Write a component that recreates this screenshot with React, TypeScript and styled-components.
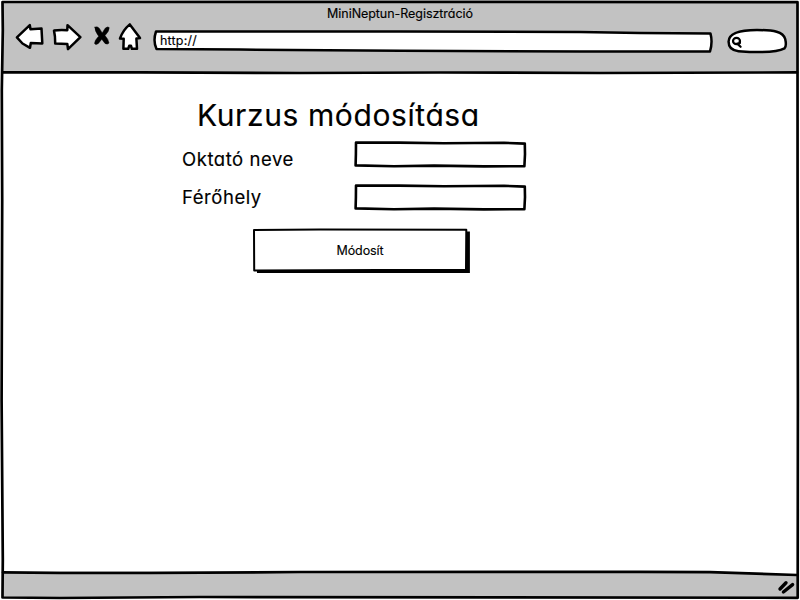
import React from "react";
import styled, { createGlobalStyle } from "styled-components";

const GlobalStyle = createGlobalStyle`
  * { box-sizing: border-box; }
  html, body { margin: 0; padding: 0; background: #fff; overflow: hidden; }
`;

const BrowserWindow = styled.div`
  position: relative;
  display: grid;
  grid-template-rows: 72px 1fr 27px;
  width: 800px;
  height: 600px;
  padding: 1px 2px 2px;
  background: #fff;
  color: #000;
  font-family: Inter, "Noto Sans", sans-serif;
  font-feature-settings: "cv11" 1;
  -webkit-text-stroke: 0.15px #000;
`;

const Header = styled.header`
  display: flex;
  flex-direction: column;
  background: #c2c2c2;
`;

const WindowTitle = styled.div`
  height: 24px;
  line-height: 25px;
  text-align: center;
  font-size: 12.5px;
  letter-spacing: -0.05px;
  white-space: nowrap;
`;

const Toolbar = styled.nav`
  display: flex;
  align-items: flex-start;
  padding-left: 12px;
`;

const Icon = styled.svg<{ $gap: number }>`
  flex: none;
  display: block;
  margin: -4px ${(p) => p.$gap}px 0 0;
  fill: #fff;
  stroke: #000;
  stroke-width: 2.5;
  stroke-linejoin: round;
  stroke-linecap: round;
`;

const Sketch = styled.svg<{ $fill?: string; $weight?: number }>`
  position: absolute;
  inset: 0;
  overflow: visible;
  pointer-events: none;
  fill: ${(p) => p.$fill ?? "none"};
  stroke: #000;
  stroke-width: ${(p) => p.$weight ?? 2.5};
  stroke-linejoin: round;
  stroke-linecap: round;
`;

const AddressBar = styled.div`
  position: relative;
  width: 560px;
  height: 24px;
  margin: 4px 14px 0 0;
  padding-left: 7px;
  font-size: 12.5px;
  line-height: 24px;
  letter-spacing: 0.2px;
`;

const AddressText = styled.span`
  position: relative;
`;

const SearchBox = styled.div`
  position: relative;
  width: 60px;
  height: 26px;
  margin-top: 3px;
`;

const Page = styled.main`
  padding: 24px 0 0 180px;
`;

const Heading = styled.h1`
  margin: 0 0 8px 15px;
  height: 36px;
  line-height: 36px;
  font-size: 30px;
  font-weight: 400;
  letter-spacing: 0.6px;
  white-space: nowrap;
`;

const FieldRow = styled.label`
  display: grid;
  grid-template-columns: 172px 172px;
  height: 43px;
`;

const LabelText = styled.span<{ $top: number }>`
  padding-top: ${(p) => p.$top}px;
  font-size: 18.5px;
  line-height: 24px;
  letter-spacing: 0.55px;
`;

const Field = styled.div`
  position: relative;
  width: 172px;
  height: 26px;
`;

const FieldInput = styled.input`
  position: relative;
  width: 100%;
  height: 100%;
  padding: 0 6px;
  border: 0;
  outline: 0;
  background: transparent;
  font: inherit;
`;

const SubmitButton = styled.button`
  position: relative;
  display: flex;
  align-items: center;
  justify-content: center;
  width: 217px;
  height: 45px;
  margin: 1px 0 0 71px;
  padding: 0 3px 1px 0;
  border: 0;
  background: transparent;
  color: #000;
  font: inherit;
  font-feature-settings: inherit;
  font-size: 12.5px;
  letter-spacing: -0.1px;
`;

const ButtonText = styled.span`
  position: relative;
`;

const StatusBar = styled.footer`
  background: #c2c2c2;
  clip-path: polygon(0 0, 88% 0, 100% 4px, 100% 100%, 0 100%);
`;

function TextField() {
  return (
    <Field>
      <Sketch $weight={2.6} width="172" height="26" viewBox="0 0 172 26">
        <path d="M2 1.6 L45 1.6 L90 2.3 L150 1.8 L170.8 2.6 L171 13 L170.4 25.2 L130 25.4 L80 24.6 L40 25.2 L1.6 24.4 L1.9 13 Z" />
      </Sketch>
      <FieldInput type="text" />
    </Field>
  );
}

export default function App() {
  return (
    <>
      <GlobalStyle />
      <BrowserWindow>
        <Header>
          <WindowTitle>MiniNeptun-Regisztráció</WindowTitle>
          <Toolbar>
            <Icon $gap={7} width="31" height="31" viewBox="14 21 31 31">
              <path d="M16.9 37.4 L29.8 25.2 L30.5 29.2 L41.5 28.6 L42.3 43.4 L30.8 43 L30 47.8 L22.5 43.5 Z" />
            </Icon>
            <Icon $gap={8} width="31" height="31" viewBox="52 21 31 31">
              <path d="M54 30.6 Q60 29.4 67.3 30.2 L67.5 25.2 L80.4 37.2 L68 49.2 L67.3 44 L55.2 43.4 Q55.3 36 54 30.6 Z" />
            </Icon>
            <Icon $gap={5} width="21" height="31" viewBox="91 21 21 31">
              <path
                d="M94.9 27.2 Q97.5 26 99.4 28.4 L102.2 33 L105.2 28.2 Q108 26 109.2 27.6 Q109.4 31 105 35.6 Q108.6 39.6 109 43 Q107.5 45 105 43.4 L101.8 39.2 L98.4 43.4 Q95.6 45.4 94.6 43.6 Q94.4 40.6 98.7 36.2 Q94.6 31 94.9 27.2 Z"
                fill="#000"
                stroke="#000"
                strokeWidth="0.5"
              />
            </Icon>
            <Icon $gap={11} width="25" height="31" viewBox="117 21 25 31">
              <path d="M129.8 24.4 L140 38 L136.4 38.6 L137 48.8 L131.9 48.8 L131 45.8 L129.2 45.8 L128.2 48.8 L123.4 48.7 L123.7 38.8 L120 38.5 Q123 30 129.8 24.4 Z" />
            </Icon>
            <AddressBar>
              <Sketch $fill="#fff" width="560" height="24" viewBox="153 29 560 24">
                <path d="M156 31.5 L400 31.5 L580 32 L640 33 L710.5 33.6 Q712.8 42 710 51.5 L580 51.5 L400 50.7 L240 49.6 L156.5 49 Q152.8 41 156 31.5 Z" />
              </Sketch>
              <AddressText>http://</AddressText>
            </AddressBar>
            <SearchBox>
              <Sketch $fill="#fff" width="60" height="26" viewBox="727 28 60 26">
                <path d="M738.5 51.2 C731 50.5 728.5 46.5 728.6 41.5 C728.8 34 737 30 757 30 C774 30 783 31.8 785.2 39 Q786.8 46 784.5 48.4 C776 53 757 52.6 738.5 51.2 Z" />
                <ellipse cx="736.5" cy="41" rx="3.5" ry="3.2" strokeWidth="2.2" />
                <path d="M737.2 43.6 L740.6 46.8 M739.8 43.2 L740 41.5" strokeWidth="2.2" />
              </Sketch>
            </SearchBox>
          </Toolbar>
        </Header>
        <Page>
          <Heading>Kurzus módosítása</Heading>
          <FieldRow>
            <LabelText $top={6}>Oktató neve</LabelText>
            <TextField />
          </FieldRow>
          <FieldRow>
            <LabelText $top={1}>Férőhely</LabelText>
            <TextField />
          </FieldRow>
          <SubmitButton type="button">
            <Sketch width="217" height="45" viewBox="253 228 217 45">
              <path d="M257 231.5 H469.9 V273 H257 Z" fill="#000" stroke="none" />
              <path d="M254 230 L320 229.5 L466.3 229.8 L466 269.8 L380 270 L254.2 270.5 Z" fill="#fff" strokeWidth="2" />
            </Sketch>
            <ButtonText>Módosít</ButtonText>
          </SubmitButton>
        </Page>
        <StatusBar />
        <Sketch $weight={2.7} width="800" height="600" viewBox="0 0 800 600">
          <path d="M2.5 2 L300 1.8 L797.5 2.2 L797.6 200 L797.9 400 L797.7 597.8 L500 597.3 L200 597 L60 598 L2.5 597.5 L2.8 560 L1.6 400 L2.2 200 L1.8 90 L2.8 30 Z" />
          <path d="M3 72.3 L140 72.3 L300 73 L440 72.5 L600 73 L797 72.4 M3 572.3 L60 573 L150 573 L300 572 L640 571.8 L710 572.2 L797 575" />
          <path d="M780 589 L786 582.8 M783.4 592 L792.6 584.6" strokeWidth="3.4" />
        </Sketch>
      </BrowserWindow>
    </>
  );
}
